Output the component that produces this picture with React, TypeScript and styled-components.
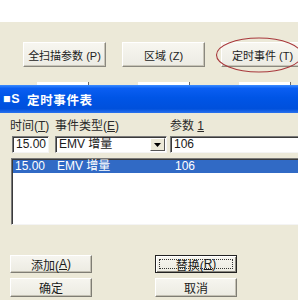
import React from "react";
import styled, { createGlobalStyle } from "styled-components";

const GlobalStyle = createGlobalStyle`
  html, body { margin: 0; padding: 0; background: #ffffff; }
  body { overflow: hidden; font-family: "Liberation Sans", "Noto Sans CJK SC", sans-serif; }
`;

const FONT = `"Liberation Sans", "Noto Sans CJK SC", sans-serif`;

const Page = styled.div`
  width: 298px;
  height: 300px;
  overflow: hidden;
  background: #ece9d8;
  display: flex;
  flex-direction: column;
  font-family: ${FONT};
  color: #000;
`;

const TopStrip = styled.div`
  height: 22px;
  background: #ffffff;
  flex: none;
`;

const Toolbar = styled.div`
  height: 63px;
  flex: none;
  background: #ece9d8;
  display: flex;
  flex-direction: column;
`;

const ButtonRow = styled.div`
  display: flex;
  gap: 16px;
  padding: 20px 0 0 23px;
`;

const ButtonSlot = styled.div`
  position: relative;
  flex: none;
`;

const ToolButton = styled.button`
  width: 83px;
  height: 25px;
  padding: 0;
  margin: 0;
  font-family: ${FONT};
  font-size: 11px;
  color: #222;
  background: linear-gradient(#f7f6f0, #ecebe3);
  border: 1px solid;
  border-color: #ffffff #8a887f #8a887f #ffffff;
  box-shadow: inset -1px -1px 0 #c8c5b8;
  display: flex;
  align-items: center;
  justify-content: center;
  white-space: nowrap;
`;

const Ellipse = styled.svg`
  position: absolute;
  left: -6px;
  top: -5px;
  width: 88px;
  height: 37px;
  overflow: visible;
  pointer-events: none;
`;

const PeekRow = styled.div`
  margin-top: auto;
  display: flex;
  gap: 49px;
  padding-left: 37px;
  height: 3px;
`;

const PeekBox = styled.div`
  width: 51px;
  height: 3px;
  background: #ffffff;
  border-right: 1px solid #6b6b6b;
`;

const TitleBar = styled.div`
  height: 28px;
  flex: none;
  background: linear-gradient(
    #3b8cff 0%,
    #0a5ef2 12%,
    #0055e6 45%,
    #0050dc 85%,
    #2a72ee 100%
  );
  display: flex;
  align-items: center;
  padding-left: 3px;
  gap: 7px;
  color: #ffffff;
  font-weight: bold;
  font-size: 12.5px;
  letter-spacing: 0.6px;
`;

const Body = styled.div`
  flex: 1;
  background: #ece9d8;
  padding: 6px 0 0 10px;
  display: flex;
  flex-direction: column;
`;

const FieldGrid = styled.div`
  display: grid;
  grid-template-columns: 45px 115px 140px;
  grid-template-rows: 15px 17px;
  row-gap: 2px;
`;

const Label = styled.div`
  font-size: 12px;
  line-height: 15px;
  white-space: nowrap;
  color: #2a2a2a;
`;

const U = styled.span`
  text-decoration: underline;
`;

const TextInput = styled.div<{ $w: number; $ml?: number }>`
  width: ${(p) => p.$w}px;
  margin-left: ${(p) => p.$ml ?? 0}px;
  height: 17px;
  box-sizing: border-box;
  background: #ffffff;
  border: 1px solid;
  border-color: #7a7a7a #f4f4f4 #f4f4f4 #7a7a7a;
  box-shadow: inset 1px 1px 0 #3a3a3a;
  font-size: 12px;
  line-height: 15px;
  padding-left: 3px;
  white-space: nowrap;
  overflow: hidden;
  display: flex;
  align-items: center;
  color: #1a1a1a;
`;

const Combo = styled(TextInput)`
  justify-content: space-between;
  padding-right: 1px;
`;

const DropButton = styled.div`
  width: 15px;
  height: 13px;
  box-sizing: border-box;
  background: #ece9d8;
  border: 1px solid;
  border-color: #ffffff #555 #555 #ffffff;
  display: flex;
  align-items: center;
  justify-content: center;
  flex: none;
`;

const ListBox = styled.div`
  margin: 5px 0 0 1px;
  width: 300px;
  height: 67px;
  box-sizing: border-box;
  background: #ffffff;
  border: 1px solid;
  border-color: #7a7a7a #f4f4f4 #f4f4f4 #7a7a7a;
  box-shadow: inset 1px 1px 0 #3a3a3a;
  padding: 1px 0 0 1px;
`;

const ListRow = styled.div<{ $selected?: boolean }>`
  display: grid;
  grid-template-columns: 42px 118px 1fr;
  height: 13px;
  line-height: 13px;
  font-size: 12px;
  padding-left: 2px;
  background: ${(p) => (p.$selected ? "#316ac5" : "transparent")};
  color: ${(p) => (p.$selected ? "#ffffff" : "#000")};
  white-space: nowrap;
`;

const ActionGrid = styled.div`
  margin-top: 30px;
  display: grid;
  grid-template-columns: 82px 82px;
  grid-template-rows: 18px 19px;
  column-gap: 63px;
  row-gap: 5px;
`;

const ActionButton = styled.button<{ $focused?: boolean }>`
  width: 82px;
  height: 100%;
  padding: 0;
  margin: 0;
  font-family: ${FONT};
  font-size: 12px;
  color: #1a1a1a;
  background: linear-gradient(#f6f5ef, #ecebe2);
  border: 1px solid;
  border-color: ${(p) =>
    p.$focused ? "#222 #222 #222 #222" : "#ffffff #7f7d74 #7f7d74 #ffffff"};
  box-shadow: ${(p) =>
    p.$focused
      ? "inset 1px 1px 0 #fff, inset -1px -1px 0 #8a887f"
      : "inset -1px -1px 0 #c4c1b4"};
  display: flex;
  align-items: center;
  justify-content: center;
  position: relative;
  white-space: nowrap;
`;

const FocusRect = styled.span`
  position: absolute;
  left: 3px;
  right: 3px;
  top: 3px;
  bottom: 3px;
  border: 1px dotted #333;
  pointer-events: none;
`;

export default function App() {
  return (
    <>
      <GlobalStyle />
      <Page>
        <TopStrip />
        <Toolbar>
          <ButtonRow>
            <ButtonSlot>
              <ToolButton>全扫描参数 (P)</ToolButton>
            </ButtonSlot>
            <ButtonSlot>
              <ToolButton>区域 (Z)</ToolButton>
            </ButtonSlot>
            <ButtonSlot>
              <ToolButton>定时事件 (T)</ToolButton>
              <Ellipse viewBox="0 0 88 37">
                <ellipse
                  cx="44"
                  cy="18"
                  rx="42.5"
                  ry="17"
                  fill="none"
                  stroke="#a8383c"
                  strokeWidth="1.1"
                />
              </Ellipse>
            </ButtonSlot>
          </ButtonRow>
          <PeekRow>
            <PeekBox />
            <PeekBox />
            <PeekBox />
          </PeekRow>
        </Toolbar>
        <TitleBar>
          <span>■S</span>
          <span>定时事件表</span>
        </TitleBar>
        <Body>
          <FieldGrid>
            <Label>
              时间(<U>T</U>)
            </Label>
            <Label>
              事件类型(<U>E</U>)
            </Label>
            <Label>
              参数 <U>1</U>
            </Label>
            <TextInput $w={37} $ml={2}>15.00</TextInput>
            <Combo $w={112}>
              <span>EMV 增量</span>
              <DropButton>
                <svg width="7" height="4" viewBox="0 0 7 4">
                  <path d="M0 0h7L3.5 4z" fill="#000" />
                </svg>
              </DropButton>
            </Combo>
            <TextInput $w={140}>106</TextInput>
          </FieldGrid>
          <ListBox>
            <ListRow $selected>
              <span>15.00</span>
              <span>EMV 增量</span>
              <span>106</span>
            </ListRow>
          </ListBox>
          <ActionGrid>
            <ActionButton>
              添加(<U>A</U>)
            </ActionButton>
            <ActionButton $focused>
              替换(<U>R</U>)
              <FocusRect />
            </ActionButton>
            <ActionButton>确定</ActionButton>
            <ActionButton>取消</ActionButton>
          </ActionGrid>
        </Body>
      </Page>
    </>
  );
}
